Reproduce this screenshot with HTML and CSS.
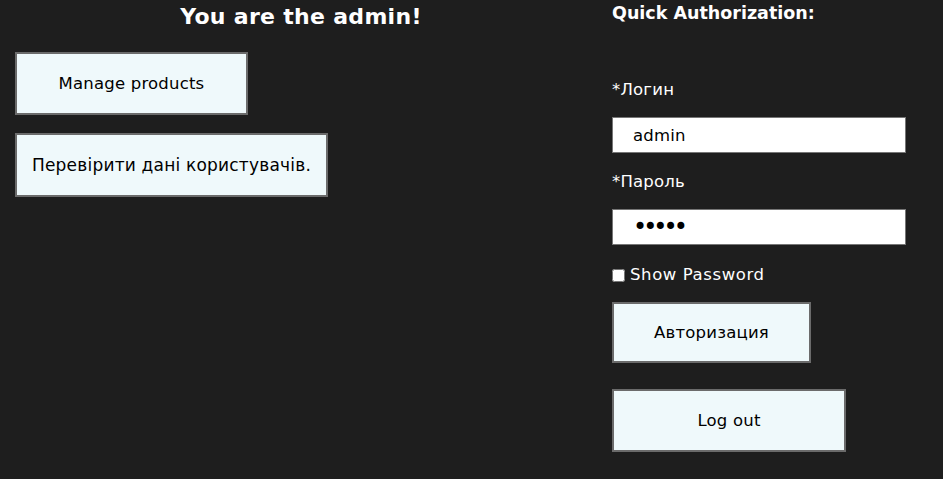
FILE: index.html
```html
<!DOCTYPE html>
<html lang="uk">
<head>
<meta charset="utf-8">
<title>Admin</title>
<link rel="stylesheet" href="styles.css">
</head>
<body>
<div class="page">
  <section class="admin">
    <h1 class="admin-title">You are the admin!</h1>
    <button class="btn btn-products" type="button">Manage products</button>
    <button class="btn btn-users" type="button">Перевірити дані користувачів.</button>
  </section>
  <aside class="auth">
    <h2 class="auth-title">Quick Authorization:</h2>
    <label class="field-label label-login" for="login">*Логин</label>
    <input class="field" id="login" type="text" value="admin">
    <label class="field-label label-pass" for="pass">*Пароль</label>
    <input class="field field-pass" id="pass" type="password" value="admin">
    <label class="show-pass"><input class="show-check" type="checkbox">Show Password</label>
    <button class="btn btn-login" type="button">Авторизация</button>
    <button class="btn btn-logout" type="button">Log out</button>
  </aside>
</div>
</body>
</html>
```
FILE: styles.css
```css
html, body {
  margin: 0;
  padding: 0;
  background: #1e1e1e;
}
body {
  font-family: "DejaVu Sans", "Noto Sans", sans-serif;
  color: #ffffff;
}
.page {
  display: flex;
  align-items: flex-start;
}
.admin {
  width: 602px;
  padding-left: 15px;
  box-sizing: border-box;
  display: flex;
  flex-direction: column;
  align-items: flex-start;
}
.admin-title {
  align-self: stretch;
  margin: 0 0 0 -15px;
  padding-top: 4px;
  font-size: 22px;
  line-height: 26px;
  font-weight: bold;
  text-align: center;
  letter-spacing: 0.3px;
}
.btn {
  box-sizing: border-box;
  background: #eff9fb;
  border: 2px solid #6b6b6b;
  color: #000;
  font-family: inherit;
  font-size: 16.5px;
  letter-spacing: 0.2px;
  padding: 0;
  margin: 0;
  text-align: center;
}
.btn-products {
  margin-top: 22px;
  width: 233px;
  height: 63px;
}
.btn-users {
  margin-top: 18px;
  width: 313px;
  height: 64px;
  font-size: 17px;
  letter-spacing: 0.2px;
}
.auth {
  margin-left: 10px;
  width: 294px;
  display: flex;
  flex-direction: column;
  align-items: flex-start;
}
.auth-title {
  margin: 0;
  padding-top: 2px;
  font-size: 17.5px;
  line-height: 22px;
  font-weight: bold;
}
.field-label {
  font-size: 16.5px;
  letter-spacing: 0.2px;
  line-height: 20px;
}
.label-login {
  margin-top: 56px;
}
.label-pass {
  margin-top: 19px;
}
.field {
  margin: 17px 0 0 0;
  box-sizing: border-box;
  width: 294px;
  height: 36px;
  border: 1px solid #767676;
  background: #fff;
  padding: 0 0 0 20px;
  font-family: inherit;
  font-size: 16.5px;
  letter-spacing: 0.2px;
  color: #000;
  outline: none;
}
.field-pass {
  font-size: 24px;
  letter-spacing: -4px;
}
.show-pass {
  margin-top: 20px;
  display: flex;
  align-items: center;
  font-size: 16.5px;
  letter-spacing: 0.6px;
  line-height: 20px;
}
.show-check {
  margin: 0 5px 0 0;
  width: 13px;
  height: 13px;
}
.btn-login {
  margin-top: 17px;
  width: 199px;
  height: 61px;
}
.btn-logout {
  margin-top: 26px;
  width: 234px;
  height: 63px;
}
```
